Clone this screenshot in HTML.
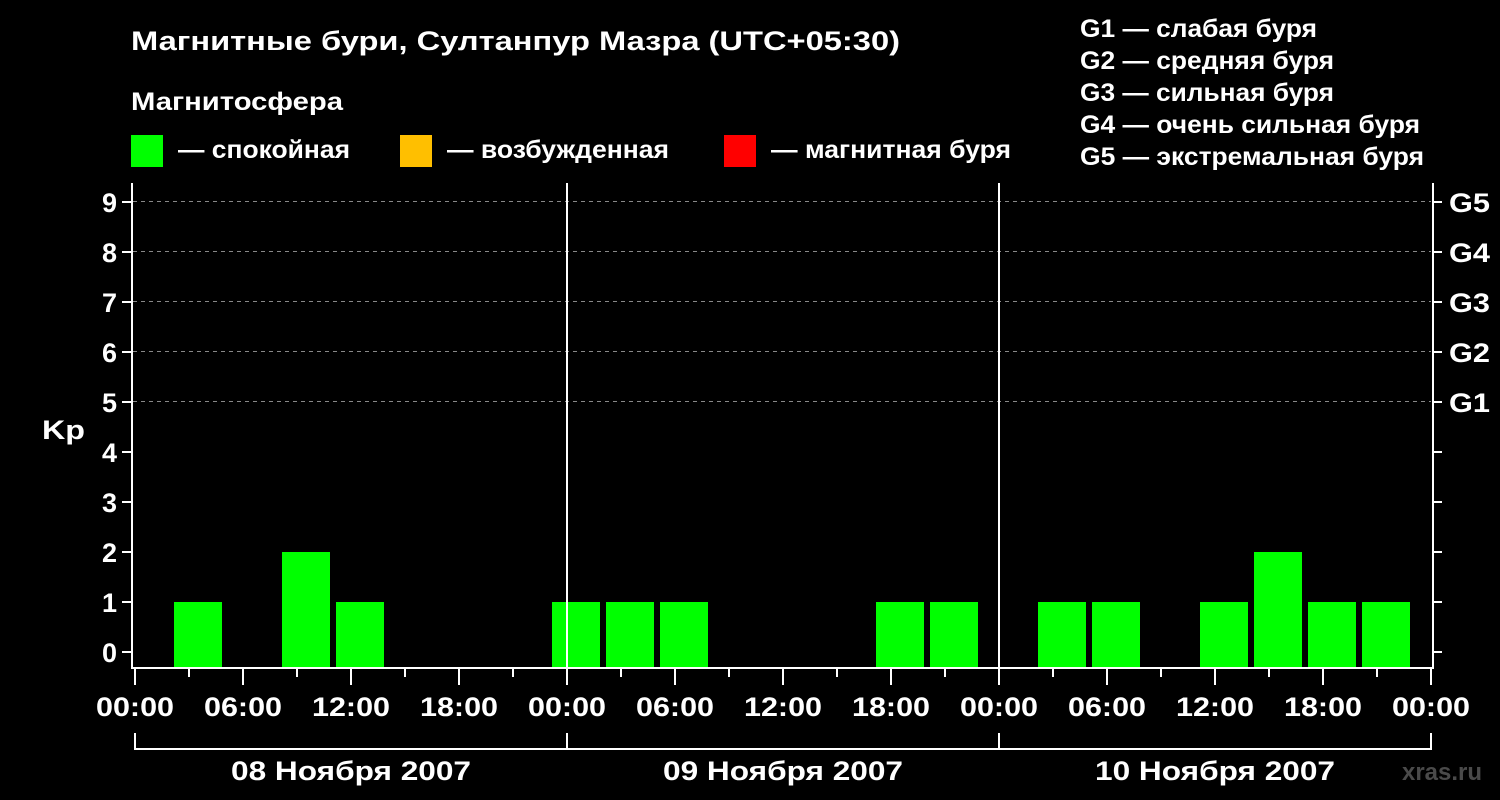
<!DOCTYPE html>
<html><head><meta charset="utf-8"><style>
html,body{margin:0;padding:0;background:#000;width:1500px;height:800px;overflow:hidden}
svg{display:block}
text{font-family:"Liberation Sans",sans-serif;font-weight:bold;fill:#fff}
</style></head><body>
<svg width="1500" height="800" viewBox="0 0 1500 800">
<text x="131" y="50" font-size="27" textLength="769" lengthAdjust="spacingAndGlyphs">Магнитные бури, Султанпур Мазра (UTC+05:30)</text>
<text x="131" y="110" font-size="25" textLength="212" lengthAdjust="spacingAndGlyphs">Магнитосфера</text>
<rect x="131" y="135" width="32" height="32" fill="#00ff00"/>
<text x="178" y="158" font-size="25" textLength="172" lengthAdjust="spacingAndGlyphs">— спокойная</text>
<rect x="400" y="135" width="32" height="32" fill="#ffbf00"/>
<text x="447" y="158" font-size="25" textLength="222" lengthAdjust="spacingAndGlyphs">— возбужденная</text>
<rect x="724" y="135" width="32" height="32" fill="#ff0000"/>
<text x="771" y="158" font-size="25" textLength="240" lengthAdjust="spacingAndGlyphs">— магнитная буря</text>
<g font-size="25">
<text x="1080" y="37" textLength="237" lengthAdjust="spacingAndGlyphs">G1 — слабая буря</text>
<text x="1080" y="69" textLength="254" lengthAdjust="spacingAndGlyphs">G2 — средняя буря</text>
<text x="1080" y="101" textLength="254" lengthAdjust="spacingAndGlyphs">G3 — сильная буря</text>
<text x="1080" y="133" textLength="340" lengthAdjust="spacingAndGlyphs">G4 — очень сильная буря</text>
<text x="1080" y="165" textLength="344" lengthAdjust="spacingAndGlyphs">G5 — экстремальная буря</text>
</g>
<g stroke="#888" stroke-dasharray="4,4" stroke-width="1">
<line x1="133" x2="1431" y1="201.5" y2="201.5"/>
<line x1="133" x2="1431" y1="251.5" y2="251.5"/>
<line x1="133" x2="1431" y1="301.5" y2="301.5"/>
<line x1="133" x2="1431" y1="351.5" y2="351.5"/>
<line x1="133" x2="1431" y1="401.5" y2="401.5"/>
</g>
<g fill="#00ff00">
<rect x="174" y="602" width="48" height="66"/>
<rect x="282" y="552" width="48" height="116"/>
<rect x="336" y="602" width="48" height="66"/>
<rect x="552" y="602" width="48" height="66"/>
<rect x="606" y="602" width="48" height="66"/>
<rect x="660" y="602" width="48" height="66"/>
<rect x="876" y="602" width="48" height="66"/>
<rect x="930" y="602" width="48" height="66"/>
<rect x="1038" y="602" width="48" height="66"/>
<rect x="1092" y="602" width="48" height="66"/>
<rect x="1200" y="602" width="48" height="66"/>
<rect x="1254" y="552" width="48" height="116"/>
<rect x="1308" y="602" width="48" height="66"/>
<rect x="1362" y="602" width="48" height="66"/>
</g>
<g stroke="#fff" stroke-width="2" fill="none">
<path d="M132 183 V668 H1433 V183"/>
<line x1="567" y1="183" x2="567" y2="668"/>
<line x1="999" y1="183" x2="999" y2="668"/>
<path d="M122 652H132M122 602H132M122 552H132M122 502H132M122 452H132M122 402H132M122 352H132M122 302H132M122 252H132M122 202H132"/>
<path d="M1433 652H1442M1433 602H1442M1433 552H1442M1433 502H1442M1433 452H1442M1433 402H1442M1433 352H1442M1433 302H1442M1433 252H1442M1433 202H1442"/>
<path d="M135 669V685M243 669V685M351 669V685M459 669V685M567 669V685M675 669V685M783 669V685M891 669V685M999 669V685M1107 669V685M1215 669V685M1323 669V685M1431 669V685"/>
<path d="M189 669V677M297 669V677M405 669V677M513 669V677M621 669V677M729 669V677M837 669V677M945 669V677M1053 669V677M1161 669V677M1269 669V677M1377 669V677"/>
<path d="M135 733V749H1431V733M567 733V749M999 733V749"/>
</g>
<g font-size="27" text-anchor="end">
<text x="117" y="662">0</text><text x="117" y="612">1</text><text x="117" y="562">2</text>
<text x="117" y="512">3</text><text x="117" y="462">4</text><text x="117" y="412">5</text>
<text x="117" y="362">6</text><text x="117" y="312">7</text><text x="117" y="262">8</text>
<text x="117" y="212">9</text>
</g>
<text x="42" y="439" font-size="27" textLength="43" lengthAdjust="spacingAndGlyphs">Kp</text>
<g font-size="27">
<text x="1449" y="212" textLength="41" lengthAdjust="spacingAndGlyphs">G5</text><text x="1449" y="262" textLength="41" lengthAdjust="spacingAndGlyphs">G4</text><text x="1449" y="312" textLength="41" lengthAdjust="spacingAndGlyphs">G3</text>
<text x="1449" y="362" textLength="41" lengthAdjust="spacingAndGlyphs">G2</text><text x="1449" y="412" textLength="41" lengthAdjust="spacingAndGlyphs">G1</text>
</g>
<g font-size="27" text-anchor="middle" lengthAdjust="spacingAndGlyphs">
<text x="135" y="716" textLength="78" lengthAdjust="spacingAndGlyphs">00:00</text><text x="243" y="716" textLength="78" lengthAdjust="spacingAndGlyphs">06:00</text><text x="351" y="716" textLength="78" lengthAdjust="spacingAndGlyphs">12:00</text><text x="459" y="716" textLength="78" lengthAdjust="spacingAndGlyphs">18:00</text>
<text x="567" y="716" textLength="78" lengthAdjust="spacingAndGlyphs">00:00</text><text x="675" y="716" textLength="78" lengthAdjust="spacingAndGlyphs">06:00</text><text x="783" y="716" textLength="78" lengthAdjust="spacingAndGlyphs">12:00</text><text x="891" y="716" textLength="78" lengthAdjust="spacingAndGlyphs">18:00</text>
<text x="999" y="716" textLength="78" lengthAdjust="spacingAndGlyphs">00:00</text><text x="1107" y="716" textLength="78" lengthAdjust="spacingAndGlyphs">06:00</text><text x="1215" y="716" textLength="78" lengthAdjust="spacingAndGlyphs">12:00</text><text x="1323" y="716" textLength="78" lengthAdjust="spacingAndGlyphs">18:00</text>
<text x="1431" y="716" textLength="78" lengthAdjust="spacingAndGlyphs">00:00</text>
<text x="351" y="780" textLength="240" lengthAdjust="spacingAndGlyphs">08 Ноября 2007</text>
<text x="783" y="780" textLength="240" lengthAdjust="spacingAndGlyphs">09 Ноября 2007</text>
<text x="1215" y="780" textLength="240" lengthAdjust="spacingAndGlyphs">10 Ноября 2007</text>
</g>
<text x="1402" y="780" font-size="24" textLength="80" lengthAdjust="spacingAndGlyphs" style="fill:#4a4a4a">xras.ru</text>
</svg>
</body></html>
